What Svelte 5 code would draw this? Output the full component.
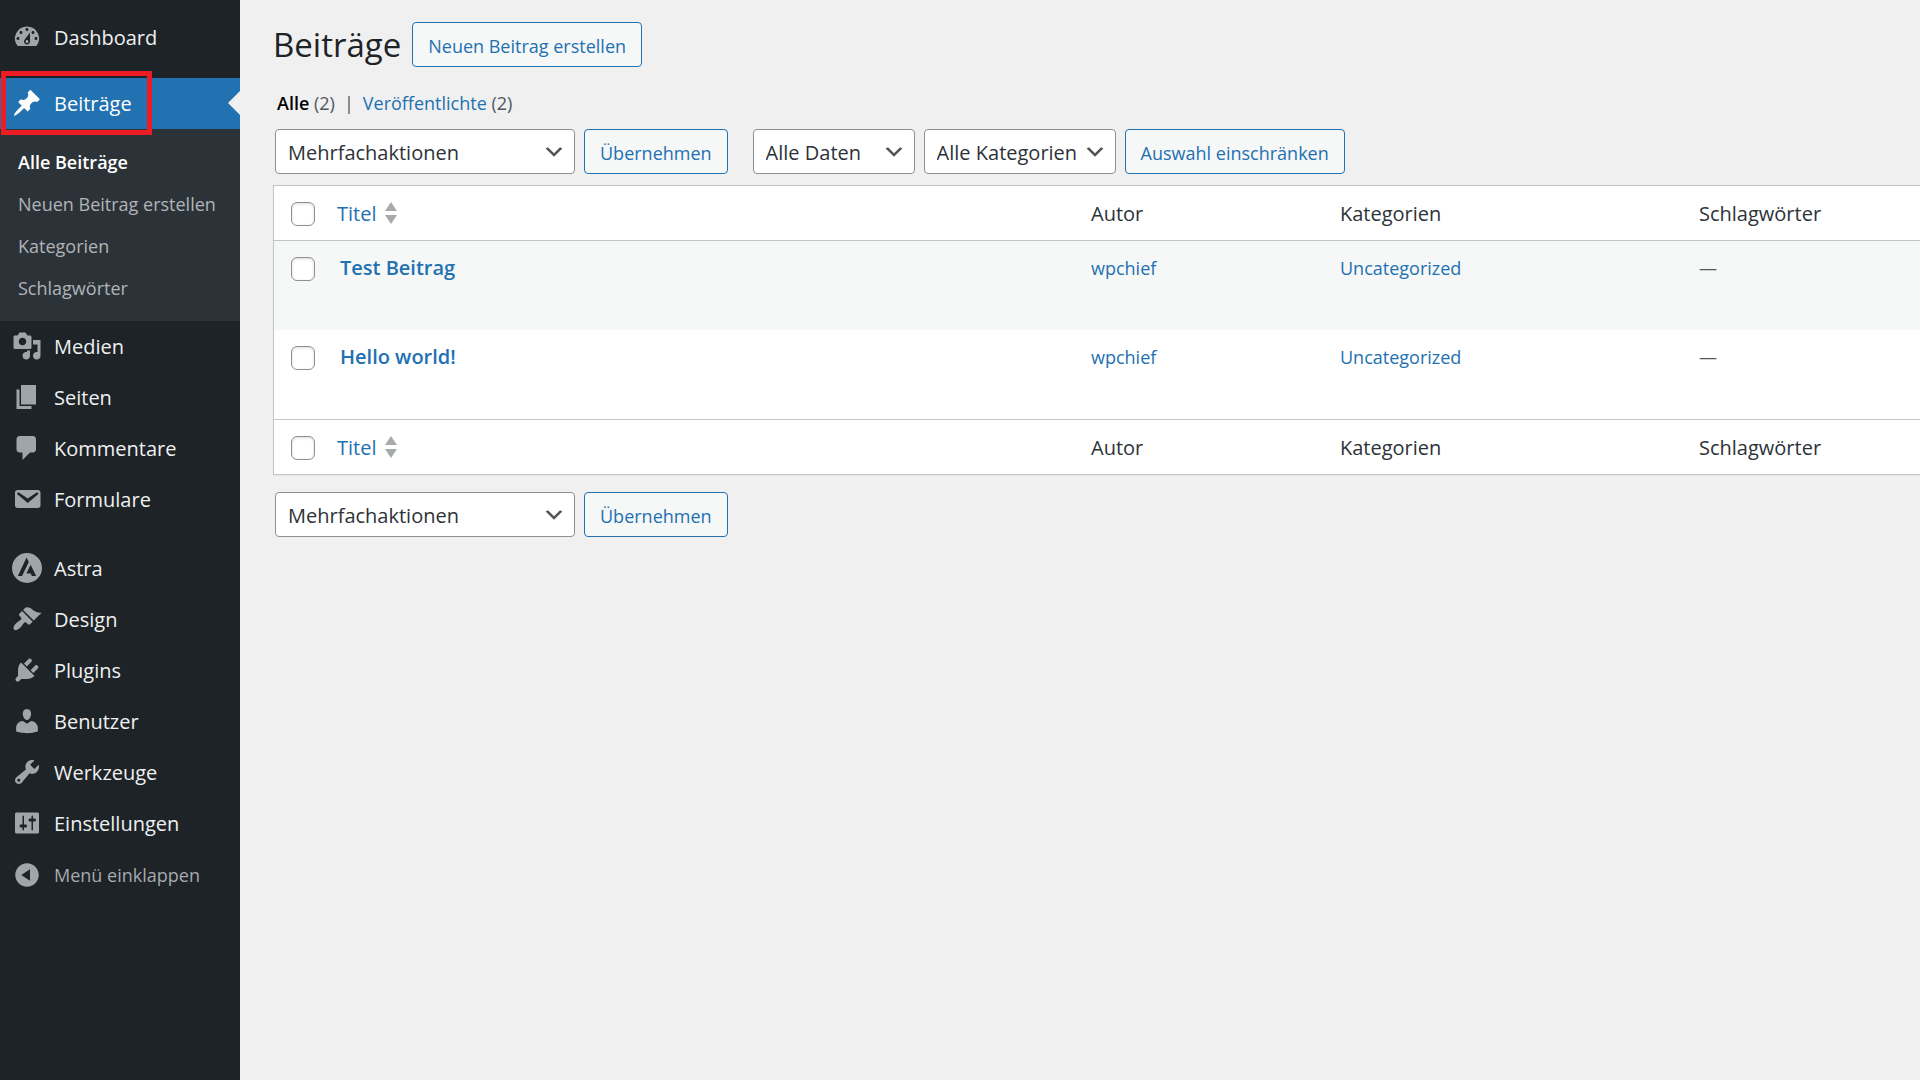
<script>
    const icons = {
        dashboard:
            "M3.76 16h12.48A7.998 7.998 0 0 0 10 3a7.998 7.998 0 0 0-6.24 13zM10 4c.55 0 1 .45 1 1s-.45 1-1 1-1-.45-1-1 .45-1 1-1zM6 6c.55 0 1 .45 1 1s-.45 1-1 1-1-.45-1-1 .45-1 1-1zm8 0c.55 0 1 .45 1 1s-.45 1-1 1-1-.45-1-1 .45-1 1-1zm-5.37 5.55L12 7v6c0 1.1-.9 2-2 2s-2-.9-2-2c0-.57.24-1.08.63-1.45zM4 10c.55 0 1 .45 1 1s-.45 1-1 1-1-.45-1-1 .45-1 1-1zm12 0c.55 0 1 .45 1 1s-.45 1-1 1-1-.45-1-1 .45-1 1-1zm-5 3c0-.55-.45-1-1-1s-1 .45-1 1 .45 1 1 1 1-.45 1-1z",
        post: "M10.44 3.02l1.82-1.82 6.36 6.35-1.83 1.82c-1.05-.68-2.48-.57-3.41.36l-.75.75c-.92.93-1.04 2.35-.35 3.41l-1.83 1.82-2.41-2.41-2.8 2.79c-.42.42-3.38 2.71-3.8 2.29s1.86-3.39 2.28-3.81l2.79-2.79L4.1 9.36l1.83-1.82c1.05.69 2.48.57 3.4-.36l.75-.75c.93-.92 1.05-2.35.36-3.41z",
        media: "M13 11V4c0-.55-.45-1-1-1h-1.67L9 1H5L3.67 3H2c-.55 0-1 .45-1 1v7c0 .55.45 1 1 1h10c.55 0 1-.45 1-1zM7 4.5c1.38 0 2.5 1.12 2.5 2.5S8.38 9.5 7 9.5 4.5 8.38 4.5 7 5.62 4.5 7 4.5zM14 6h5v10.5c0 1.38-1.12 2.5-2.5 2.5S14 17.88 14 16.5s1.12-2.5 2.5-2.5c.17 0 .34.02.5.05V9h-3V6zm-4 8.05V13h2v3.5c0 1.38-1.12 2.5-2.5 2.5S7 17.88 7 16.5 8.12 14 9.5 14c.17 0 .34.02.5.05z",
        page: "M6 15V2h10v13H6zm-1 1h8v2H3V5h2v11z",
        comments:
            "M5 2h9c1.1 0 2 .9 2 2v7c0 1.1-.9 2-2 2h-2l-5 5v-5H5c-1.1 0-2-.9-2-2V4c0-1.1.9-2 2-2z",
        email: "M3.87 4h13.25C18.37 4 19 4.59 19 5.79v8.42c0 1.19-.63 1.79-1.88 1.79H3.87c-1.25 0-1.88-.6-1.88-1.79V5.79c0-1.2.63-1.79 1.88-1.79zm6.62 8.6l6.74-5.53c.24-.2.43-.66.13-1.07-.29-.41-.82-.42-1.17-.17l-5.7 3.86L4.8 5.83c-.35-.25-.88-.24-1.17.17-.3.41-.11.87.13 1.07z",
        astra: "M10 0a10 10 0 1 0 0 20a10 10 0 1 0 0-20zM9.7 3L11.2 6L6.7 15.3H3.9zM12.4 7.8L16.1 15.3H13.2L12.5 13.7H9.6z",
        appearance:
            "M14.48 11.06L7.41 3.99l1.5-1.5c.5-.56 2.3-.47 3.51.32 1.21.8 1.43 1.28 2.91 2.1 1.18.64 2.45 1.26 4.45.85zm-.71.71L6.7 4.7 4.93 6.47c-.39.39-.39 1.02 0 1.41l1.06 1.06c.39.39.39 1.03 0 1.42-.6.6-1.43 1.11-2.21 1.69-.35.26-.7.53-1.01.84C1.43 14.23.4 16.08 1.4 17.07c.99 1 2.84-.03 4.18-1.36.31-.31.58-.66.85-1.02.57-.78 1.08-1.61 1.69-2.21.39-.39 1.02-.39 1.41 0l1.06 1.06c.39.39 1.02.39 1.41 0z",
        plugins:
            "M13.11 4.36L9.87 7.6 8 5.73l3.24-3.24c.35-.34 1.05-.2 1.56.32.52.51.66 1.21.31 1.55zm-8 1.77l.91-1.12 9.01 9.01-1.19.84c-.71.71-2.63 1.16-3.82 1.16H6.14L4.9 17.26c-.59.59-1.54.59-2.12 0-.59-.58-.59-1.53 0-2.12l1.24-1.24v-3.88c0-1.13.4-3.19 1.09-3.89zm7.26 3.97l3.24-3.24c.34-.35 1.04-.21 1.55.31.52.51.66 1.21.31 1.55l-3.24 3.25z",
        users: "M10 9.25c-2.27 0-2.73-3.44-2.73-3.44C7 4.02 7.82 2 9.97 2c2.16 0 2.98 2.02 2.71 3.81 0 0-.41 3.44-2.68 3.44zm0 2.57L12.72 10c2.39 0 4.52 2.33 4.52 4.53v2.49s-3.65 1.13-7.24 1.13c-3.65 0-7.24-1.13-7.24-1.13v-2.49c0-2.25 1.94-4.48 4.47-4.48z",
        tools: "M16.68 9.77c-1.34 1.34-3.3 1.67-4.95.99l-5.41 6.52c-.99.99-2.59.99-3.58 0s-.99-2.59 0-3.57l6.52-5.42c-.68-1.65-.35-3.61.99-4.95 1.28-1.28 3.12-1.62 4.72-1.06l-2.89 2.89 2.82 2.82 2.86-2.87c.53 1.58.18 3.39-1.08 4.65zM3.81 16.21c.4.39 1.04.39 1.43 0 .4-.4.4-1.04 0-1.43-.39-.4-1.03-.4-1.43 0-.39.39-.39 1.03 0 1.43z",
        settings:
            "M18 16V4c0-.55-.45-1-1-1H3c-.55 0-1 .45-1 1v12c0 .55.45 1 1 1h14c.55 0 1-.45 1-1zM8 11h1c.55 0 1 .45 1 1s-.45 1-1 1H8v1.5c0 .28-.22.5-.5.5s-.5-.22-.5-.5V13H6c-.55 0-1-.45-1-1s.45-1 1-1h1V5.5c0-.28.22-.5.5-.5s.5.22.5.5V11zm5-2h-1c-.55 0-1-.45-1-1s.45-1 1-1h1V5.5c0-.28.22-.5.5-.5s.5.22.5.5V7h1c.55 0 1 .45 1 1s-.45 1-1 1h-1v5.5c0 .28-.22.5-.5.5s-.5-.22-.5-.5V9z",
        collapse:
            "M10 2.16c4.33 0 7.84 3.51 7.84 7.84s-3.51 7.84-7.84 7.84S2.16 14.33 2.16 10 5.71 2.16 10 2.16zm2 11.72V6.12L6.18 9.97z",
    };

    const menuGroups = [
        [{ label: "Dashboard", icon: "dashboard" }],
        [
            {
                label: "Beiträge",
                icon: "post",
                current: true,
                children: [
                    "Alle Beiträge",
                    "Neuen Beitrag erstellen",
                    "Kategorien",
                    "Schlagwörter",
                ],
            },
            { label: "Medien", icon: "media" },
            { label: "Seiten", icon: "page" },
            { label: "Kommentare", icon: "comments" },
            { label: "Formulare", icon: "email" },
        ],
        [
            { label: "Astra", icon: "astra" },
            { label: "Design", icon: "appearance" },
            { label: "Plugins", icon: "plugins" },
            { label: "Benutzer", icon: "users" },
            { label: "Werkzeuge", icon: "tools" },
            { label: "Einstellungen", icon: "settings" },
        ],
    ];

    const posts = [
        { id: 2, title: "Test Beitrag", author: "wpchief", category: "Uncategorized" },
        { id: 1, title: "Hello world!", author: "wpchief", category: "Uncategorized" },
    ];

    let selected = $state([]);
    let allSelected = $derived(selected.length === posts.length);

    function toggleAll(event) {
        selected = event.currentTarget.checked ? posts.map((p) => p.id) : [];
    }
</script>

{#snippet icon(name)}
    <svg class="icon" viewBox="0 0 20 20" aria-hidden="true">
        <path d={icons[name]} fill-rule="evenodd" />
    </svg>
{/snippet}

{#snippet bulkActions(id)}
    <div class="actions">
        <select {id} class="bulk-select" aria-label="Mehrfachaktion wählen">
            <option>Mehrfachaktionen</option>
            <option>Bearbeiten</option>
            <option>In den Papierkorb legen</option>
        </select>
        <button class="button" type="button">Übernehmen</button>
    </div>
{/snippet}

{#snippet headings()}
    <tr>
        <td class="check">
            <input
                type="checkbox"
                aria-label="Alle auswählen"
                checked={allSelected}
                onchange={toggleAll}
            />
        </td>
        <th scope="col">
            <a class="sort" href="#titel">
                Titel
                <svg class="sort-icon" viewBox="0 0 12 22" aria-hidden="true">
                    <path d="M6 0l6 9H0zM0 13h12l-6 9z" />
                </svg>
            </a>
        </th>
        <th scope="col">Autor</th>
        <th scope="col">Kategorien</th>
        <th scope="col">Schlagwörter</th>
    </tr>
{/snippet}

<div class="admin">
    <nav class="sidebar" aria-label="Hauptmenü">
        {#each menuGroups as group}
            <ul class="group">
                {#each group as item (item.label)}
                    <li>
                        <a class="item" class:current={item.current} href="#{item.icon}">
                            {@render icon(item.icon)}
                            {item.label}
                            {#if item.current}
                                <span class="marker"></span>
                            {/if}
                        </a>
                        {#if item.children}
                            <ul class="submenu">
                                {#each item.children as child, i}
                                    <li>
                                        <a class:active={i === 0} href="#{item.icon}-{i}">{child}</a>
                                    </li>
                                {/each}
                            </ul>
                        {/if}
                    </li>
                {/each}
            </ul>
        {/each}
        <button class="item collapse" type="button">
            {@render icon("collapse")}
            Menü einklappen
        </button>
    </nav>

    <main class="content">
        <header class="title-bar">
            <h1>Beiträge</h1>
            <a class="button" href="#neu">Neuen Beitrag erstellen</a>
        </header>

        <ul class="views">
            <li><a class="active" href="#alle">Alle</a> (2)</li>
            <li class="divider">|</li>
            <li><a href="#publish">Veröffentlichte</a> (2)</li>
        </ul>

        <div class="tablenav">
            {@render bulkActions("bulk-top")}
            <div class="actions">
                <select class="date-select" aria-label="Nach Datum filtern">
                    <option>Alle Daten</option>
                </select>
                <select class="cat-select" aria-label="Nach Kategorie filtern">
                    <option>Alle Kategorien</option>
                    <option>Uncategorized</option>
                </select>
                <button class="button" type="button">Auswahl einschränken</button>
            </div>
        </div>

        <table>
            <colgroup>
                <col class="col-check" />
                <col />
                <col class="col-author" />
                <col class="col-categories" />
                <col class="col-tags" />
            </colgroup>
            <thead>
                {@render headings()}
            </thead>
            <tbody>
                {#each posts as post (post.id)}
                    <tr>
                        <td class="check">
                            <input
                                type="checkbox"
                                value={post.id}
                                bind:group={selected}
                                aria-label="{post.title} auswählen"
                            />
                        </td>
                        <td><a class="row-title" href="#post-{post.id}">{post.title}</a></td>
                        <td><a href="#author">{post.author}</a></td>
                        <td><a href="#category">{post.category}</a></td>
                        <td>—</td>
                    </tr>
                {/each}
            </tbody>
            <tfoot>
                {@render headings()}
            </tfoot>
        </table>

        <div class="tablenav bottom">
            {@render bulkActions("bulk-bottom")}
        </div>
    </main>
</div>

<style>
    :global(body) {
        background: #f0f0f0;
    }

    .admin {
        display: flex;
        min-height: 100vh;
        overflow: hidden;
        font-family: "Open Sans", "Noto Sans", sans-serif;
        font-size: 18px;
        line-height: 24px;
        color: #50575e;
    }

    ul {
        margin: 0;
        padding: 0;
        list-style: none;
    }

    a {
        color: #2271b1;
        text-decoration: none;
    }

    .sidebar {
        flex: 0 0 240px;
        box-sizing: border-box;
        padding-top: 12px;
        background: #1d2327;
    }

    .group {
        margin-bottom: 18px;
    }

    .group:first-of-type {
        margin-bottom: 15px;
    }

    .group:last-of-type {
        margin-bottom: 0;
    }

    .item {
        position: relative;
        display: flex;
        align-items: center;
        gap: 12px;
        box-sizing: border-box;
        width: 100%;
        height: 51px;
        padding: 0 12px;
        font-size: 20px;
        color: #f0f0f1;
    }

    .icon {
        width: 30px;
        height: 30px;
        margin-bottom: 2px;
        fill: #a0a5aa;
    }

    .current {
        background: #2271b1;
        color: #fff;
    }

    .current .icon {
        fill: #fff;
    }

    .current::after {
        content: "";
        position: absolute;
        top: 13px;
        right: 0;
        border: 12px solid transparent;
        border-left: 0;
        border-right-color: #f0f0f0;
    }

    .marker {
        position: absolute;
        top: -7px;
        bottom: -6px;
        left: 1px;
        width: 141px;
        border: 5px solid #ed1c24;
    }

    .submenu {
        padding: 12px 0;
        background: #2c3338;
    }

    .submenu a {
        display: block;
        padding: 9px 18px;
        color: #b0b4b8;
        white-space: nowrap;
    }

    .submenu a.active {
        font-weight: 600;
        color: #fff;
    }

    .collapse {
        border: 0;
        background: none;
        font-family: inherit;
        font-size: 18px;
        color: #a7aaad;
        cursor: pointer;
    }

    .collapse .icon {
        margin-bottom: 0;
    }

    .content {
        flex: 1;
        min-width: 0;
        padding: 22px 0 0 33px;
    }

    .title-bar {
        display: flex;
        align-items: center;
        gap: 11px;
    }

    h1 {
        margin: 0;
        font-size: 33px;
        font-weight: 400;
        line-height: 45px;
        color: #1d2327;
    }

    .button {
        display: inline-flex;
        align-items: center;
        box-sizing: border-box;
        height: 45px;
        padding: 2px 15px 0;
        border: 1px solid #2271b1;
        border-radius: 4px;
        background: #f6f7f7;
        font-family: inherit;
        font-size: 18px;
        line-height: 24px;
        color: #2271b1;
        white-space: nowrap;
        cursor: pointer;
    }

    .views {
        display: flex;
        gap: 9px;
        padding: 24px 0 14px 4px;
    }

    .views .active {
        font-weight: 600;
        color: #000;
    }

    .tablenav {
        display: flex;
        gap: 25px;
        padding: 0 0 11px 2px;
    }

    .tablenav.bottom {
        padding-top: 17px;
    }

    .actions {
        display: flex;
        gap: 9px;
    }

    select {
        appearance: none;
        box-sizing: border-box;
        height: 45px;
        padding: 2px 30px 0 12px;
        border: 1px solid #8c8f94;
        border-radius: 4px;
        background: #fff
            url("data:image/svg+xml,%3Csvg xmlns='http://www.w3.org/2000/svg' width='20' height='20' viewBox='0 0 20 20'%3E%3Cpath d='M5 6l5 5 5-5 2 1-7 7-7-7 2-1z' fill='%23555'/%3E%3C/svg%3E")
            no-repeat right 8px center / 24px 24px;
        font-family: inherit;
        font-size: 20px;
        color: #2c3338;
    }

    .bulk-select {
        width: 300px;
    }

    .date-select {
        width: 162px;
    }

    .cat-select {
        width: 192px;
    }

    table {
        width: 100%;
        table-layout: fixed;
        border: 1px solid #c3c4c7;
        border-right: 0;
        border-spacing: 0;
        background: #fff;
        box-shadow: 0 1px 1px rgba(0, 0, 0, 0.04);
    }

    .col-check {
        width: 51px;
    }

    .col-author {
        width: 249px;
    }

    .col-categories {
        width: 359px;
    }

    .col-tags {
        width: 233px;
    }

    th,
    td {
        padding: 15px 12px;
        text-align: left;
        vertical-align: top;
    }

    th {
        padding: 16px 12px 14px;
        font-size: 20px;
        font-weight: 400;
        color: #2c3338;
    }

    thead th,
    thead td {
        border-bottom: 1px solid #c3c4c7;
    }

    tfoot th,
    tfoot td {
        border-top: 1px solid #c3c4c7;
    }

    tbody td {
        height: 59px;
    }

    tbody tr:nth-child(odd) {
        background: #f6f7f7;
    }

    .check {
        padding: 16px 0 0 17px;
    }

    input[type="checkbox"] {
        appearance: none;
        display: block;
        box-sizing: border-box;
        width: 24px;
        height: 24px;
        margin: 0;
        border: 1px solid #8c8f94;
        border-radius: 6px;
        background: #fff;
        box-shadow: inset 0 1px 3px rgba(0, 0, 0, 0.15);
    }

    input[type="checkbox"]:checked {
        border-color: #2271b1;
        background: #2271b1;
    }

    .sort {
        display: flex;
        align-items: center;
        gap: 9px;
    }

    .sort-icon {
        width: 12px;
        height: 22px;
        margin-bottom: 2px;
        fill: #a7aaad;
    }

    .row-title {
        padding-left: 3px;
        font-size: 20px;
        font-weight: 600;
    }
</style>
